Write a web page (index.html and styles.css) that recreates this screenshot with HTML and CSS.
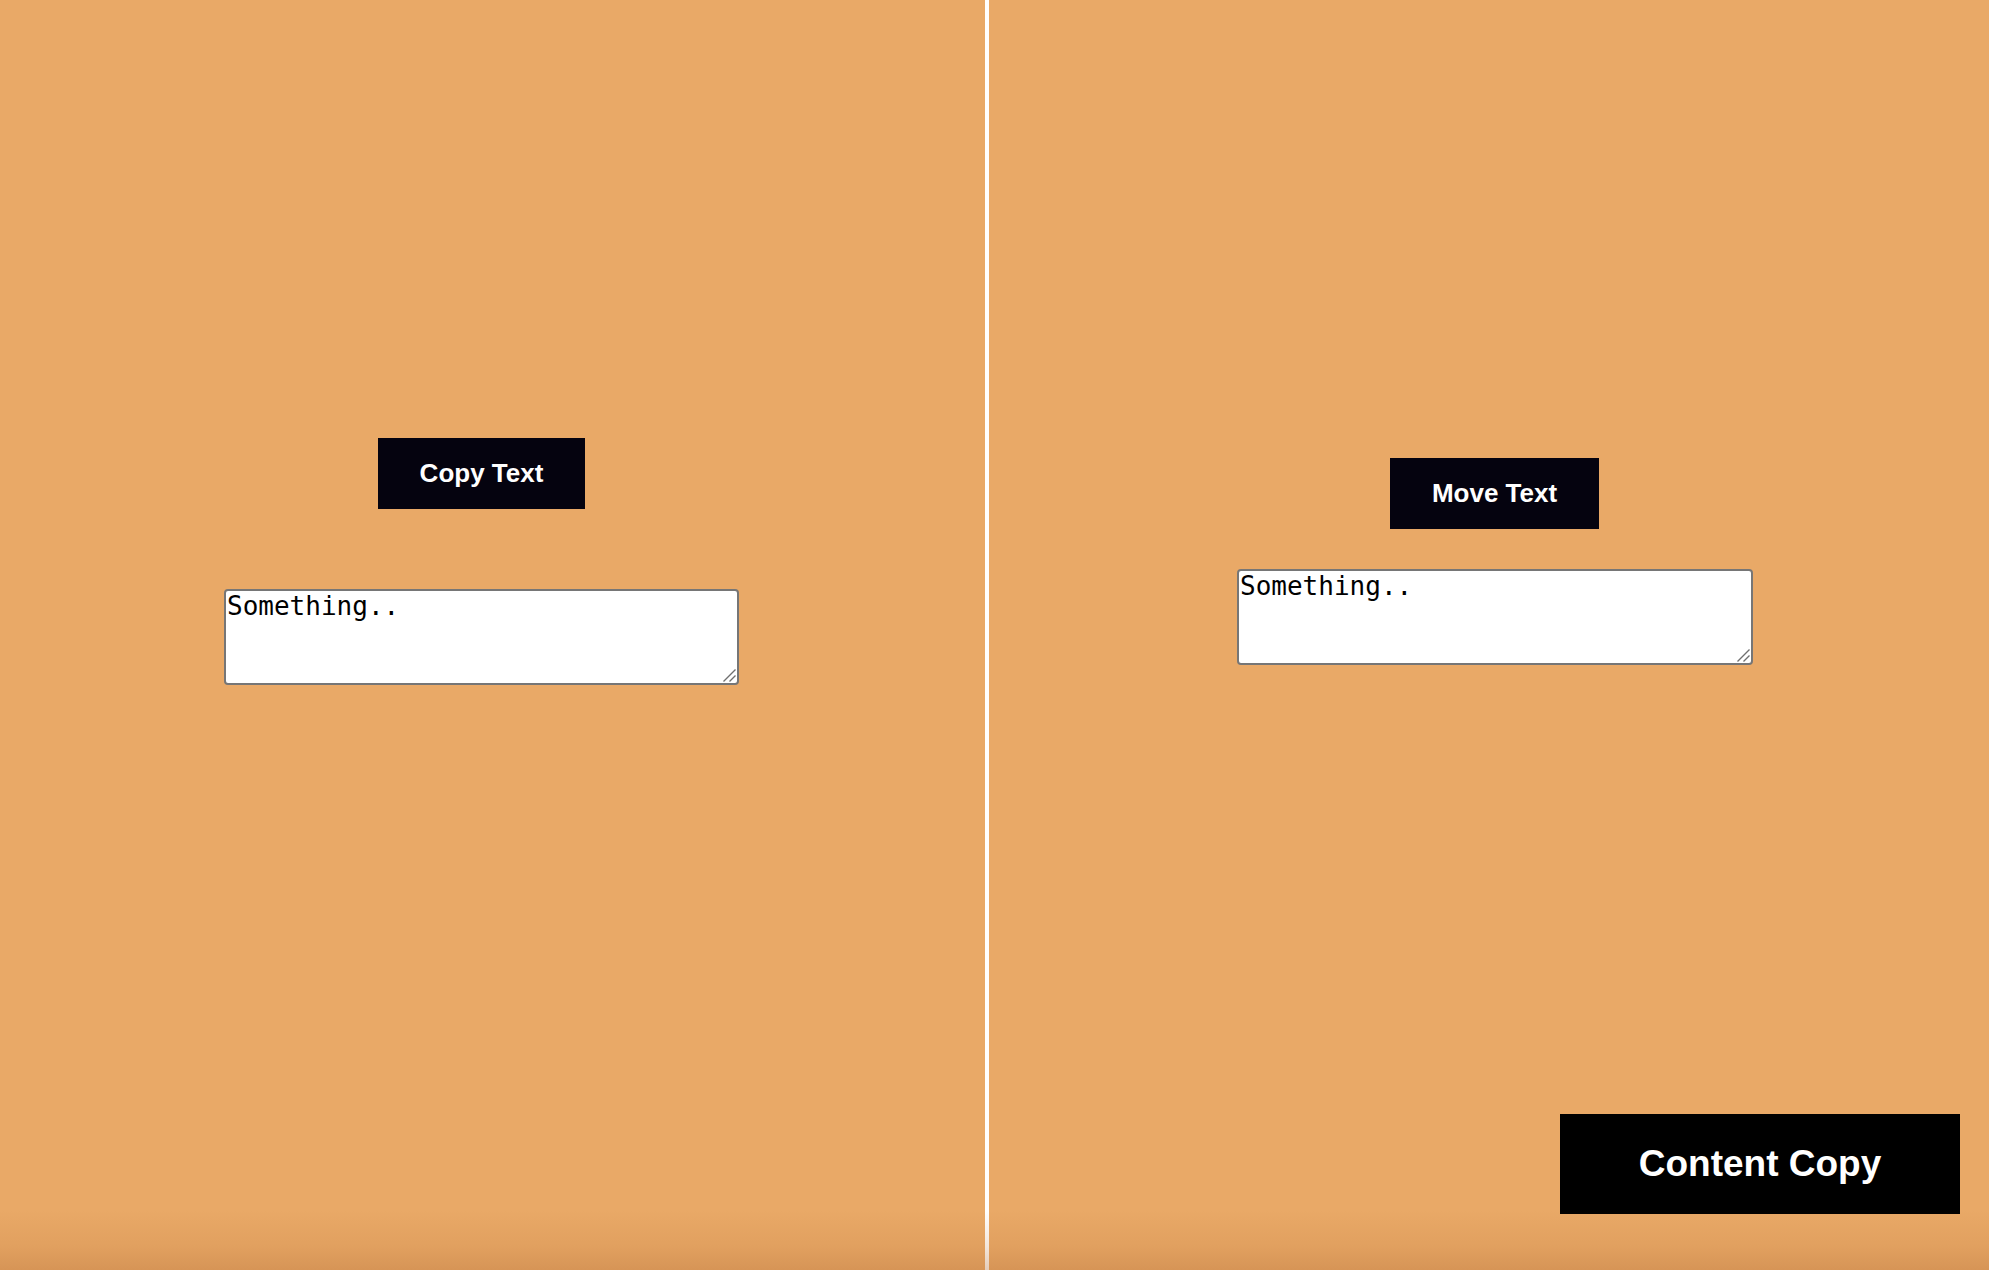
FILE: index.html
```html
<!DOCTYPE html>
<html>
<head>
<meta charset="utf-8">
<link rel="stylesheet" href="styles.css">
</head>
<body>
<div class="page">
  <section class="pane pane-left">
    <button class="btn btn-copy">Copy Text</button>
    <div class="field field-left">
      <textarea class="box">Something..</textarea>
      <svg class="grip" width="16" height="16" viewBox="0 0 16 16"><path d="M2.5 14.5 L14.5 2.5 M8.5 14.5 L14.5 8.5" stroke="#6f6f6f" stroke-width="1.4" fill="none"/></svg>
    </div>
  </section>
  <div class="divider"></div>
  <section class="pane pane-right">
    <button class="btn btn-move">Move Text</button>
    <div class="field field-right">
      <textarea class="box">Something..</textarea>
      <svg class="grip" width="16" height="16" viewBox="0 0 16 16"><path d="M2.5 14.5 L14.5 2.5 M8.5 14.5 L14.5 8.5" stroke="#6f6f6f" stroke-width="1.4" fill="none"/></svg>
    </div>
  </section>
  <button class="content-copy">Content Copy</button>
  <div class="shade"></div>
</div>
</body>
</html>
```
FILE: styles.css
```css
html, body {
  margin: 0;
  padding: 0;
  width: 1989px;
  height: 1270px;
  overflow: hidden;
}
body {
  background: #e9a967;
  font-family: "Liberation Sans", Arial, sans-serif;
}
.page {
  position: relative;
  display: flex;
  width: 1989px;
  height: 1270px;
}
.pane {
  display: flex;
  flex-direction: column;
  align-items: flex-start;
}
.pane-left {
  width: 985px;
  padding-top: 438px;
}
.divider {
  width: 4px;
  background: #ffffff;
  height: 100%;
}
.pane-right {
  width: 1000px;
  padding-top: 458px;
}
.btn {
  background: #05030f;
  color: #ffffff;
  border: none;
  border-radius: 0;
  font-family: "Liberation Sans", Arial, sans-serif;
  font-weight: bold;
  font-size: 26px;
  height: 71px;
  padding: 0;
  margin: 0;
  cursor: pointer;
}
.btn-copy {
  width: 207px;
  margin-left: 378px;
}
.btn-move {
  width: 209px;
  margin-left: 401px;
}
.field {
  position: relative;
  width: 515px;
  height: 96px;
}
.field-left {
  margin-left: 224px;
  margin-top: 80px;
}
.field-right {
  width: 516px;
  margin-left: 248px;
  margin-top: 40px;
}
.box {
  display: block;
  box-sizing: border-box;
  width: 100%;
  height: 100%;
  border: 2px solid #767676;
  border-radius: 4px;
  background: #ffffff;
  color: #000000;
  font-family: "DejaVu Sans Mono", "Liberation Mono", monospace;
  font-size: 26px;
  line-height: 30px;
  padding: 0 0 0 1px;
  margin: 0;
  outline: none;
  resize: none;
  overflow: hidden;
}
.grip {
  position: absolute;
  right: 2px;
  bottom: 2px;
  pointer-events: none;
}
.content-copy {
  position: absolute;
  right: 29px;
  bottom: 56px;
  width: 400px;
  height: 100px;
  background: #000000;
  color: #ffffff;
  border: none;
  padding: 0;
  font-family: "Liberation Sans", Arial, sans-serif;
  font-weight: bold;
  font-size: 37px;
}
.shade {
  position: absolute;
  left: 0;
  right: 0;
  bottom: 0;
  height: 60px;
  background: linear-gradient(to bottom, rgba(190, 120, 60, 0) 0%, rgba(190, 120, 60, 0.18) 60%, rgba(180, 110, 55, 0.35) 100%);
  pointer-events: none;
}
```
